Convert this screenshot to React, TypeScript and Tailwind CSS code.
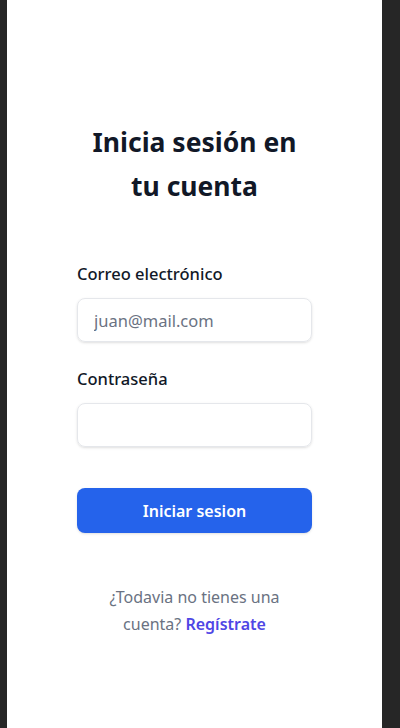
import { useState } from "react";

export default function App() {
  const [email, setEmail] = useState("");
  const [password, setPassword] = useState("");

  return (
    <div className="flex min-h-screen bg-[#262626] font-['Noto_Sans',sans-serif]">
      <div className="ml-[7px] flex min-h-[728px] w-[375px] flex-col bg-white px-[70px] pt-[120px]">
        <h2 className="text-center text-[26.5px] font-bold leading-[44px] text-[#111827]">
          Inicia sesión en tu cuenta
        </h2>

        <form className="mt-[54px] flex flex-col" onSubmit={e => e.preventDefault()}>
          <label htmlFor="email" className="text-[16.5px] font-medium leading-6 text-[#111827]">
            Correo electrónico
          </label>
          <input
            id="email"
            type="email"
            value={email}
            onChange={e => setEmail(e.target.value)}
            placeholder="juan@mail.com"
            className="mt-3 h-[44px] w-full rounded-lg border border-gray-200 px-4 text-[16.5px] text-gray-900 shadow-sm outline-none placeholder:text-gray-500"
          />

          <label htmlFor="password" className="mt-[25px] text-[16.5px] font-medium leading-6 text-[#111827]">
            Contraseña
          </label>
          <input
            id="password"
            type="password"
            value={password}
            onChange={e => setPassword(e.target.value)}
            className="mt-3 h-[44px] w-full rounded-lg border border-gray-200 px-4 text-[16.5px] text-gray-900 shadow-sm outline-none"
          />

          <button
            type="submit"
            className="mt-[41px] h-[45px] w-full rounded-lg bg-[#2563eb] text-[16px] font-semibold text-white shadow-sm"
          >
            Iniciar sesion
          </button>
        </form>

        <p className="mx-auto mt-[51px] w-[200px] text-center text-[16px] leading-[27px] text-gray-500">
          ¿Todavia no tienes una cuenta? <a href="#" className="font-semibold text-[#4f46e5]">Regístrate</a>
        </p>
      </div>
    </div>
  );
}
